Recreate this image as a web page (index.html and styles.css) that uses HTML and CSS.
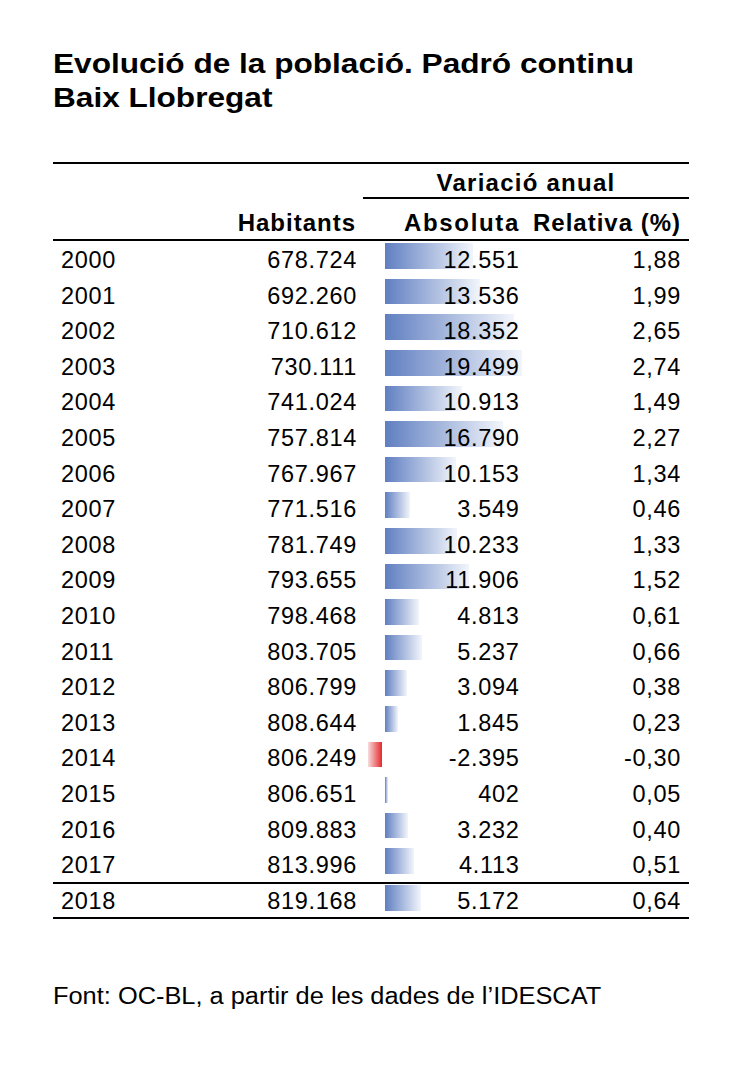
FILE: index.html
```html
<!DOCTYPE html>
<html lang="ca">
<head>
<meta charset="utf-8">
<title>Evolució de la població</title>
<link rel="stylesheet" href="styles.css">
</head>
<body>
<div class="page">
  <h1 class="title">Evolució de la població. Padró continu<br>Baix Llobregat</h1>
  <div class="table">
    <div class="row head1"><div class="blank"></div><div class="group">Variació anual</div></div>
    <div class="row head2"><div></div><div class="num">Habitants</div><div class="num abs-h">Absoluta</div><div class="num rel">Relativa (%)</div></div>
    <div class="row data"><div class="year">2000</div><div class="num">678.724</div><div class="num abs"><span class="bar" style="--w:88.2px"></span><span class="val">12.551</span></div><div class="num rel">1,88</div></div>
    <div class="row data"><div class="year">2001</div><div class="num">692.260</div><div class="num abs"><span class="bar" style="--w:95.1px"></span><span class="val">13.536</span></div><div class="num rel">1,99</div></div>
    <div class="row data"><div class="year">2002</div><div class="num">710.612</div><div class="num abs"><span class="bar" style="--w:128.9px"></span><span class="val">18.352</span></div><div class="num rel">2,65</div></div>
    <div class="row data"><div class="year">2003</div><div class="num">730.111</div><div class="num abs"><span class="bar" style="--w:137px"></span><span class="val">19.499</span></div><div class="num rel">2,74</div></div>
    <div class="row data"><div class="year">2004</div><div class="num">741.024</div><div class="num abs"><span class="bar" style="--w:76.7px"></span><span class="val">10.913</span></div><div class="num rel">1,49</div></div>
    <div class="row data"><div class="year">2005</div><div class="num">757.814</div><div class="num abs"><span class="bar" style="--w:118px"></span><span class="val">16.790</span></div><div class="num rel">2,27</div></div>
    <div class="row data"><div class="year">2006</div><div class="num">767.967</div><div class="num abs"><span class="bar" style="--w:71.3px"></span><span class="val">10.153</span></div><div class="num rel">1,34</div></div>
    <div class="row data"><div class="year">2007</div><div class="num">771.516</div><div class="num abs"><span class="bar" style="--w:24.9px"></span><span class="val">3.549</span></div><div class="num rel">0,46</div></div>
    <div class="row data"><div class="year">2008</div><div class="num">781.749</div><div class="num abs"><span class="bar" style="--w:71.9px"></span><span class="val">10.233</span></div><div class="num rel">1,33</div></div>
    <div class="row data"><div class="year">2009</div><div class="num">793.655</div><div class="num abs"><span class="bar" style="--w:83.7px"></span><span class="val">11.906</span></div><div class="num rel">1,52</div></div>
    <div class="row data"><div class="year">2010</div><div class="num">798.468</div><div class="num abs"><span class="bar" style="--w:33.8px"></span><span class="val">4.813</span></div><div class="num rel">0,61</div></div>
    <div class="row data"><div class="year">2011</div><div class="num">803.705</div><div class="num abs"><span class="bar" style="--w:36.8px"></span><span class="val">5.237</span></div><div class="num rel">0,66</div></div>
    <div class="row data"><div class="year">2012</div><div class="num">806.799</div><div class="num abs"><span class="bar" style="--w:21.7px"></span><span class="val">3.094</span></div><div class="num rel">0,38</div></div>
    <div class="row data"><div class="year">2013</div><div class="num">808.644</div><div class="num abs"><span class="bar" style="--w:13px"></span><span class="val">1.845</span></div><div class="num rel">0,23</div></div>
    <div class="row data"><div class="year">2014</div><div class="num">806.249</div><div class="num abs"><span class="bar neg" style="--w:14px"></span><span class="val">-2.395</span></div><div class="num rel">-0,30</div></div>
    <div class="row data"><div class="year">2015</div><div class="num">806.651</div><div class="num abs"><span class="bar" style="--w:2.8px"></span><span class="val">402</span></div><div class="num rel">0,05</div></div>
    <div class="row data"><div class="year">2016</div><div class="num">809.883</div><div class="num abs"><span class="bar" style="--w:22.7px"></span><span class="val">3.232</span></div><div class="num rel">0,40</div></div>
    <div class="row data"><div class="year">2017</div><div class="num">813.996</div><div class="num abs"><span class="bar" style="--w:28.9px"></span><span class="val">4.113</span></div><div class="num rel">0,51</div></div>
    <div class="row data last"><div class="year">2018</div><div class="num">819.168</div><div class="num abs"><span class="bar" style="--w:36.3px"></span><span class="val">5.172</span></div><div class="num rel">0,64</div></div>
  </div>
  <p class="source">Font: OC-BL, a partir de les dades de l’IDESCAT</p>
</div>
</body>
</html>
```

FILE: styles.css
```css
* { box-sizing: border-box; }

html, body {
  margin: 0;
  padding: 0;
  background: #ffffff;
}

body {
  font-family: "Liberation Sans", Arial, sans-serif;
  color: #000000;
}

.page {
  width: 750px;
  padding: 47px 0 0 53px;
}

.title {
  width: max-content;
  margin: 0;
  font-size: 27px;
  line-height: 34px;
  font-weight: bold;
  white-space: nowrap;
  transform: scaleX(1.17);
  transform-origin: left top;
}

.table {
  width: 636px;
  margin-top: 47px;
  border-top: 2px solid #000;
  border-bottom: 2px solid #000;
}

.row {
  display: grid;
  grid-template-columns: 177px 133px 162px 164px;
}

.head1,
.head2 {
  font-weight: bold;
  font-size: 24px;
  line-height: 26px;
  letter-spacing: 1px;
}

.head1 .blank {
  grid-column: 1 / 3;
}

.head1 .group {
  grid-column: 3 / 5;
  text-align: center;
  padding: 6px 0 1px;
  border-bottom: 2px solid #000;
  letter-spacing: 1.25px;
}

.head2 {
  padding: 11px 0 3px;
  border-bottom: 2px solid #000;
}

.head2 .num {
  padding-right: 7px;
}

.head2 .abs-h {
  padding-right: 5px;
  letter-spacing: 1.66px;
}

.head2 .rel {
  padding-right: 8px;
}

.data {
  height: 35.6px;
  padding-top: 3px;
  font-size: 23.5px;
  line-height: 32.6px;
  letter-spacing: 0.7px;
}

.data.last {
  height: 35px;
  padding-top: 2px;
  line-height: 31px;
  border-top: 2px solid #000;
}

.year {
  padding-left: 8px;
}

.num {
  text-align: right;
  padding-right: 6px;
}

.num.rel {
  padding-right: 8px;
}

.abs {
  position: relative;
  padding-right: 5.5px;
}

.bar {
  position: absolute;
  left: 22px;
  top: -0.8px;
  height: 25.6px;
  width: var(--w);
  background: linear-gradient(to right, #607fc1, #f2f5fb);
}

.data.last .bar {
  top: -0.5px;
}

.bar.neg {
  left: 5px;
  background: linear-gradient(to right, #f8dcdc, #e42a2d);
}

.val {
  position: relative;
}

.source {
  width: max-content;
  margin: 64px 0 0;
  font-size: 23.5px;
  line-height: 27px;
  white-space: nowrap;
  transform: scaleX(1.08);
  transform-origin: left top;
}
```
